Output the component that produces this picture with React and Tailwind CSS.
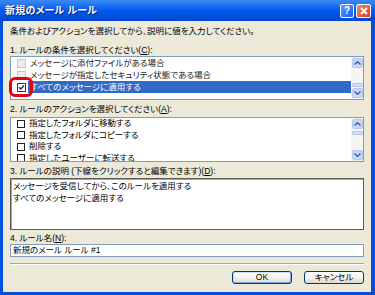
import React from 'react';

const font = "font-['Liberation_Sans','Noto_Sans_CJK_JP',sans-serif] [font-feature-settings:'palt']";

const ScrollBtn = ({ dir }) => (
    <div className="flex h-[10px] w-[11px] items-center justify-center rounded-[2px] border border-[#b4c7f3] bg-[#c6d6fc]">
        <svg width="7" height="4" viewBox="0 0 7 4">
            <path
                d={dir === 'up' ? 'M0.5 3.5 L3.5 0.7 L6.5 3.5' : 'M0.5 0.5 L3.5 3.3 L6.5 0.5'}
                stroke="#4d6185"
                strokeWidth="1.4"
                fill="none"
            />
        </svg>
    </div>
);

// thumb: 'top' sits under the up arrow, 'bottom' sits over the down arrow
const ScrollBar = ({ thumb }) => (
    <div className="flex w-[12px] flex-col items-center justify-between bg-[#f6f5ef] py-[1px]">
        <ScrollBtn dir="up" />
        {thumb === 'top' && <div className="mb-auto mt-[2px] h-[4px] w-[11px] rounded-[1px] border border-[#b4c7f3] bg-[#d2defc]" />}
        {thumb === 'bottom' && <div className="mb-[1px] mt-auto h-[4px] w-[11px] rounded-[1px] border border-[#b4c7f3] bg-[#d2defc]" />}
        <ScrollBtn dir="down" />
    </div>
);

const XpCheck = ({ checked }) =>
    checked ? (
        <div className="flex h-[9px] w-[9px] items-center justify-center border border-[#1c3c70] bg-white">
            <svg width="7" height="7" viewBox="0 0 7 7">
                <path d="M1 3.2 L2.8 5 L6 1.6" stroke="#1a2a6a" strokeWidth="1.5" fill="none" />
            </svg>
        </div>
    ) : (
        <div className="h-[9px] w-[9px] border border-[#c9c7ba] bg-[#eeede5]" />
    );

const conditions = [
    { text: 'メッセージに添付ファイルがある場合' },
    { text: 'メッセージが指定したセキュリティ状態である場合' },
    { text: 'すべてのメッセージに適用する', checked: true, selected: true },
];

const actions = [
    '指定したフォルダに移動する',
    '指定したフォルダにコピーする',
    '削除する',
    '指定したユーザーに転送する',
];

const Label = ({ before, mnemonic, after = '):', className = '' }) => (
    <div className={`h-[12px] whitespace-nowrap text-[8.5px] leading-[12px] text-black ${className}`}>
        {before}(<span className="underline">{mnemonic}</span>{after}
    </div>
);

const XpButton = ({ children, primary }) => (
    <div
        className={`flex h-[13px] w-[60px] items-center justify-center rounded-[3px] border border-[#003c74] bg-gradient-to-b from-white via-[#f4f3ee] to-[#dcd8cc] text-[8.5px] leading-none text-black ${
            primary ? 'shadow-[inset_-1px_-1px_0_#8aa8e4,inset_1px_1px_0_#cde0fb]' : ''
        }`}
    >
        {children}
    </div>
);

export default function App() {
    return (
        <div className={`relative flex h-[295px] w-[375px] flex-col bg-[#0050dd] ${font}`}>
            {/* title bar */}
            <div className="flex h-[21px] shrink-0 items-center justify-between bg-gradient-to-b from-[#3a8bf5] via-[#0058ee] to-[#0048d0] pl-[5px] pr-[4px]">
                <span className="text-[10px] font-bold tracking-[0.2px] text-white [text-shadow:1px_1px_0_#0a1e6a]">
                    新規のメール ルール
                </span>
                <div className="flex items-center gap-[2px]">
                    <div className="flex h-[14px] w-[14px] items-center justify-center rounded-[2px] border border-white bg-gradient-to-br from-[#5d9bff] to-[#1a5ee8] text-[10px] font-bold leading-none text-white">
                        ?
                    </div>
                    <div className="flex h-[14px] w-[15px] items-center justify-center rounded-[2px] border border-white bg-gradient-to-br from-[#f08a6a] to-[#d8391a]">
                        <svg width="8" height="8" viewBox="0 0 8 8">
                            <path d="M1 1 L7 7 M7 1 L1 7" stroke="white" strokeWidth="1.8" />
                        </svg>
                    </div>
                </div>
            </div>

            {/* dialog body */}
            <div className="mb-[3px] ml-[3px] mr-[4px] flex flex-1 flex-col bg-[#ece9d8] px-[7px]">
                <div className="h-[20px] whitespace-nowrap text-[8.5px] leading-[20px] text-black">
                    条件およびアクションを選択してから、説明に値を入力してください。
                </div>

                <Label className="mt-[3px]" before="1. ルールの条件を選択してください" mnemonic="C" />
                <div className="flex h-[44px] border border-[#7f9db9] bg-white">
                    <div className="flex flex-1 flex-col overflow-hidden">
                        {conditions.map((c) => (
                            <div key={c.text} className="flex h-[12px] shrink-0 items-center">
                                <div className="ml-[5px] mr-[2px] flex w-[10px] justify-center">
                                    <XpCheck checked={c.checked} />
                                </div>
                                <div
                                    className={`flex h-full flex-1 items-center whitespace-nowrap pl-[2px] text-[8.5px] ${
                                        c.selected ? 'bg-[#316ac5] text-white' : 'text-[#222]'
                                    }`}
                                >
                                    {c.text}
                                </div>
                            </div>
                        ))}
                    </div>
                    <ScrollBar thumb="bottom" />
                </div>

                <Label className="mt-[3px]" before="2. ルールのアクションを選択してください" mnemonic="A" />
                <div className="mt-[2px] flex h-[45px] border border-[#7f9db9] bg-white">
                    <div className="flex flex-1 flex-col overflow-hidden">
                        {actions.map((a) => (
                            <div key={a} className="flex h-[11.5px] shrink-0 items-center">
                                <div className="ml-[6px] mr-[4px] h-[8px] w-[8px] border border-[#222] bg-white" />
                                <span className="whitespace-nowrap text-[8.5px] text-black">{a}</span>
                            </div>
                        ))}
                    </div>
                    <ScrollBar thumb="top" />
                </div>

                <Label className="mt-[3px]" before="3. ルールの説明 (下線をクリックすると編集できます)" mnemonic="D" />
                <div className="mt-[1px] h-[52px] border border-[#5c5b55] bg-white shadow-[inset_1px_1px_0_#a7a597] px-[2px] pt-[1px] text-[8.5px] leading-[12px] text-black">
                    <div>メッセージを受信してから、このルールを適用する</div>
                    <div>すべてのメッセージに適用する</div>
                </div>

                <Label className="mt-[2px]" before="4. ルール名" mnemonic="N" />
                <div className="flex h-[13px] items-center border border-[#7f9db9] bg-white pl-[2px] text-[8.5px] text-black">
                    新規のメール ルール #1
                </div>

                <div className="mt-[6px] h-[1px] bg-[#aca899]" />
                <div className="h-[1px] bg-white" />

                <div className="mt-[6px] flex justify-end gap-[12px]">
                    <XpButton primary>OK</XpButton>
                    <XpButton>キャンセル</XpButton>
                </div>
            </div>

            {/* red annotation around the checked box */}
            <div className="absolute left-[9px] top-[77px] h-[20px] w-[24px] rounded-[6px] border-[3px] border-[#e60012]" />
        </div>
    );
}
